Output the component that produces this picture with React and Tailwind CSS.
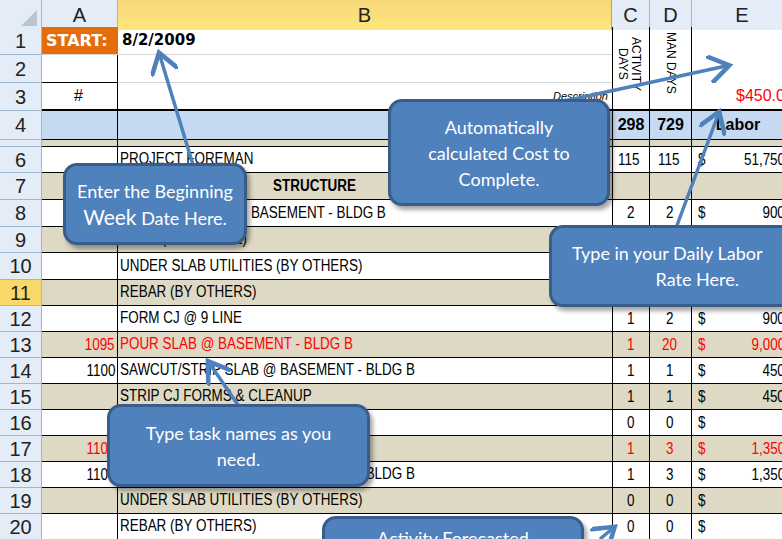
import React from "react";

const rowsH = [28, 28, 28, 29, 7, 26, 27, 27, 26, 27, 26, 26, 26, 26, 26, 26, 26, 26, 26, 26];
const data = {
  6: ["", "PROJECT FOREMAN", "115", "115", "51,750.0"],
  7: ["", "                                         STRUCTURE", "", "", null],
  8: ["", "SLAB ON GRADE @ BASEMENT - BLDG B", "2", "2", "900.0"],
  9: ["", "CURB (SLAB EDGE)", "", "", null],
  10: ["", "UNDER SLAB UTILITIES (BY OTHERS)", "", "", null],
  11: ["", "REBAR (BY OTHERS)", "", "", null],
  12: ["", "FORM CJ @ 9 LINE", "1", "2", "900.0"],
  13: ["1095", "POUR SLAB @ BASEMENT - BLDG B", "1", "20", "9,000.0"],
  14: ["1100", "SAWCUT/STRIP SLAB @ BASEMENT - BLDG B", "1", "1", "450.0"],
  15: ["", "STRIP CJ FORMS & CLEANUP", "1", "1", "450.0"],
  16: ["", "", "0", "0", "-"],
  17: ["1105", "POUR SLAB @ BASEMENT - BLDG B", "1", "3", "1,350.0"],
  18: ["1100", "SAWCUT/STRIP SLAB @ BASEMENT - BLDG B", "1", "3", "1,350.0"],
  19: ["", "UNDER SLAB UTILITIES (BY OTHERS)", "0", "0", "-"],
  20: ["", "REBAR (BY OTHERS)", "0", "0", "-"],
};
const sans = { fontFamily: "'Liberation Sans',sans-serif" };
const cols = "grid grid-cols-[42px_76px_494px_38px_42px_100px]";

function N({ children, right }) {
  return <span className={"inline-block whitespace-pre scale-x-[0.84] " + (right ? "origin-right" : "origin-left")}>{children}</span>;
}

function Callout({ className, children }) {
  return (
    <div className={"absolute rounded-[14px] border-[3px] border-[#385d8a] bg-[#4f81bd] text-white text-[18px] leading-[26px] flex items-center justify-center text-center shadow-[3px_4px_4px_rgba(0,0,0,0.35)] " + className} style={{ fontFamily: "Lato, 'Open Sans', sans-serif" }}>
      {children}
    </div>
  );
}

export default function App() {
  return (
    <div className="relative w-[782px] h-[539px] overflow-hidden bg-white text-[14px] text-black" style={sans}>
      <div className={cols + " h-[27px] border-b border-[#9eb6ce] text-[20px] text-[#222]"}>
        <div className="bg-[#e4ecf7] border-r border-[#9eb6ce] relative"><div className="absolute right-1 bottom-1 w-0 h-0 border-l-[16px] border-l-transparent border-b-[16px] border-b-[#b8c4d2]" /></div>
        <div className="bg-[#e4ecf7] border-r border-[#9eb6ce] flex items-center justify-center">A</div>
        <div className="bg-gradient-to-b from-[#f8d77c] to-[#fde77a] border-r border-[#c9a43a] flex items-center justify-center">B</div>
        <div className="bg-[#e4ecf7] border-r border-[#9eb6ce] flex items-center justify-center">C</div>
        <div className="bg-[#e4ecf7] border-r border-[#9eb6ce] flex items-center justify-center">D</div>
        <div className="bg-[#e4ecf7] flex items-center justify-center">E</div>
      </div>
      {rowsH.map((h, i) => {
        const r = i + 1;
        const tan = r === 5 || (r >= 7 && r % 2 === 1);
        const bg = r === 4 ? "bg-[#c5d9f1]" : tan ? "bg-[#ddd9c4]" : "bg-white";
        const red = r === 13 || r === 17;
        const d = data[r];
        const bb = r === 3 ? "border-b-2 border-black" : r <= 2 ? "border-b border-[#d4d4d4]" : "border-b border-black";
        return (
          <div key={r} className={cols} style={{ height: h }}>
            <div className={"flex items-center justify-center text-[20px] border-r border-b border-[#9eb6ce] overflow-hidden " + (r === 11 ? "bg-[#f9d86a] text-[#222]" : "bg-[#e4ecf7] text-[#222]")}>{r === 5 ? "" : r}</div>
            {r === 1 ? (
              <>
                <div className="bg-[#e46c0a] text-white font-bold text-[16px] flex items-center pl-1 border-b border-[#d4d4d4]" style={{ fontFamily: "Verdana,'DejaVu Sans',sans-serif" }}>START:</div>
                <div className="font-bold text-[15px] flex items-center pl-1 border-b border-[#d4d4d4]" style={{ fontFamily: "Verdana,'DejaVu Sans',sans-serif" }}>8/2/2009</div>
              </>
            ) : (
              <>
                <div className={bg + " " + bb + " border-r border-black flex items-center justify-end pr-[2px] text-[16px] " + (red ? "text-[#ff0000]" : "")}>
                  {r === 3 ? <span className="w-full text-center text-[16px]">#</span> : d?.[0] ? <N right>{d[0]}</N> : null}
                </div>
                <div className={bg + " " + bb + " flex items-end pb-[1px] pl-[2px] text-[16px] " + (red ? "text-[#ff0000]" : "") + (r === 7 ? " font-bold" : "")}>
                  {r === 3 ? <span className="w-full text-right italic text-[11px] pr-1 pb-1">Description</span> : d?.[1] ? <N>{d[1]}</N> : null}
                </div>
              </>
            )}
            {r <= 3 ? (
              r === 1 ? (
                <>
                  <div className="border-l border-r border-black relative">
                    <div className="absolute left-[3px] top-[10px] text-[12px] leading-[13px] [writing-mode:vertical-rl] text-center whitespace-nowrap">ACTIVITY<br />DAYS</div>
                  </div>
                  <div className="border-r border-black relative">
                    <div className="absolute left-[12px] top-[5px] text-[12px] [writing-mode:vertical-rl] whitespace-nowrap">MAN DAYS</div>
                  </div>
                  <div />
                </>
              ) : (
                <>
                  <div className={"border-l border-r border-black " + (r === 3 ? "border-b-2" : "")} />
                  <div className={"border-r border-black " + (r === 3 ? "border-b-2" : "")} />
                  <div className={r === 3 ? "border-b-2 border-black flex items-center pl-[44px] text-[#ff0000] text-[16px] whitespace-nowrap" : ""}>{r === 3 ? "$450.00" : ""}</div>
                </>
              )
            ) : r === 4 ? (
              <>
                <div className="bg-[#c5d9f1] border-l border-r border-b border-black flex items-center justify-center font-bold text-[16px]">298</div>
                <div className="bg-[#c5d9f1] border-r border-b border-black flex items-center justify-center font-bold text-[16px]">729</div>
                <div className="bg-[#c5d9f1] border-b border-black flex items-center justify-center font-bold text-[16px] pr-2">Labor</div>
              </>
            ) : (
              <>
                <div className={bg + " border-l border-r border-b border-black flex items-center justify-center text-[16px] " + (red ? "text-[#ff0000]" : "")}>{d?.[2] ? <N>{d[2]}</N> : null}</div>
                <div className={bg + " border-r border-b border-black flex items-center justify-center text-[16px] " + (red ? "text-[#ff0000]" : "")}>{d?.[3] ? <N>{d[3]}</N> : null}</div>
                <div className={bg + " border-b border-black flex items-center justify-between pl-[6px] text-[16px] " + (red ? "text-[#ff0000]" : "")}>
                  {d && d[4] != null ? (<><N>$</N><span className="whitespace-nowrap -mr-[4px]"><N right>{d[4]}</N></span></>) : null}
                </div>
              </>
            )}
          </div>
        );
      })}

      <svg className="absolute inset-0 pointer-events-none" width="782" height="539">
        <defs>
          <marker id="ah" markerWidth="8" markerHeight="8" refX="5" refY="4" orient="auto" markerUnits="strokeWidth">
            <path d="M0,0 L6,4 L0,8" fill="none" stroke="#4f81bd" strokeWidth="1.3" />
          </marker>
        </defs>
        <g stroke="#4f81bd" strokeWidth="3.5" fill="none" markerEnd="url(#ah)">
          <line x1="193" y1="165" x2="160" y2="56" />
          <line x1="560" y1="102" x2="726" y2="66" />
          <line x1="676" y1="228" x2="718" y2="115" />
          <line x1="238" y1="405" x2="210" y2="364" />
          <line x1="600" y1="539" x2="612" y2="529" />
        </g>
      </svg>

      <Callout className="left-[63px] top-[163px] w-[184px] h-[82px]"><div>Enter the Beginning<br /><span className="text-[21px]">Week</span> Date Here.</div></Callout>
      <Callout className="left-[388px] top-[99px] w-[222px] h-[107px]"><div>Automatically<br />calculated Cost to<br />Complete.</div></Callout>
      <Callout className="left-[549px] top-[225px] w-[250px] h-[82px] justify-start pl-[20px]"><div>Type in your Daily Labor<br /><span className="pl-[60px]">Rate Here.</span></div></Callout>
      <Callout className="left-[107px] top-[404px] w-[263px] h-[83px]"><div>Type task names as you<br />need.</div></Callout>
      <Callout className="left-[322px] top-[516px] w-[262px] h-[60px] items-start pt-[6px]"><div>Activity Forecasted</div></Callout>
    </div>
  );
}
